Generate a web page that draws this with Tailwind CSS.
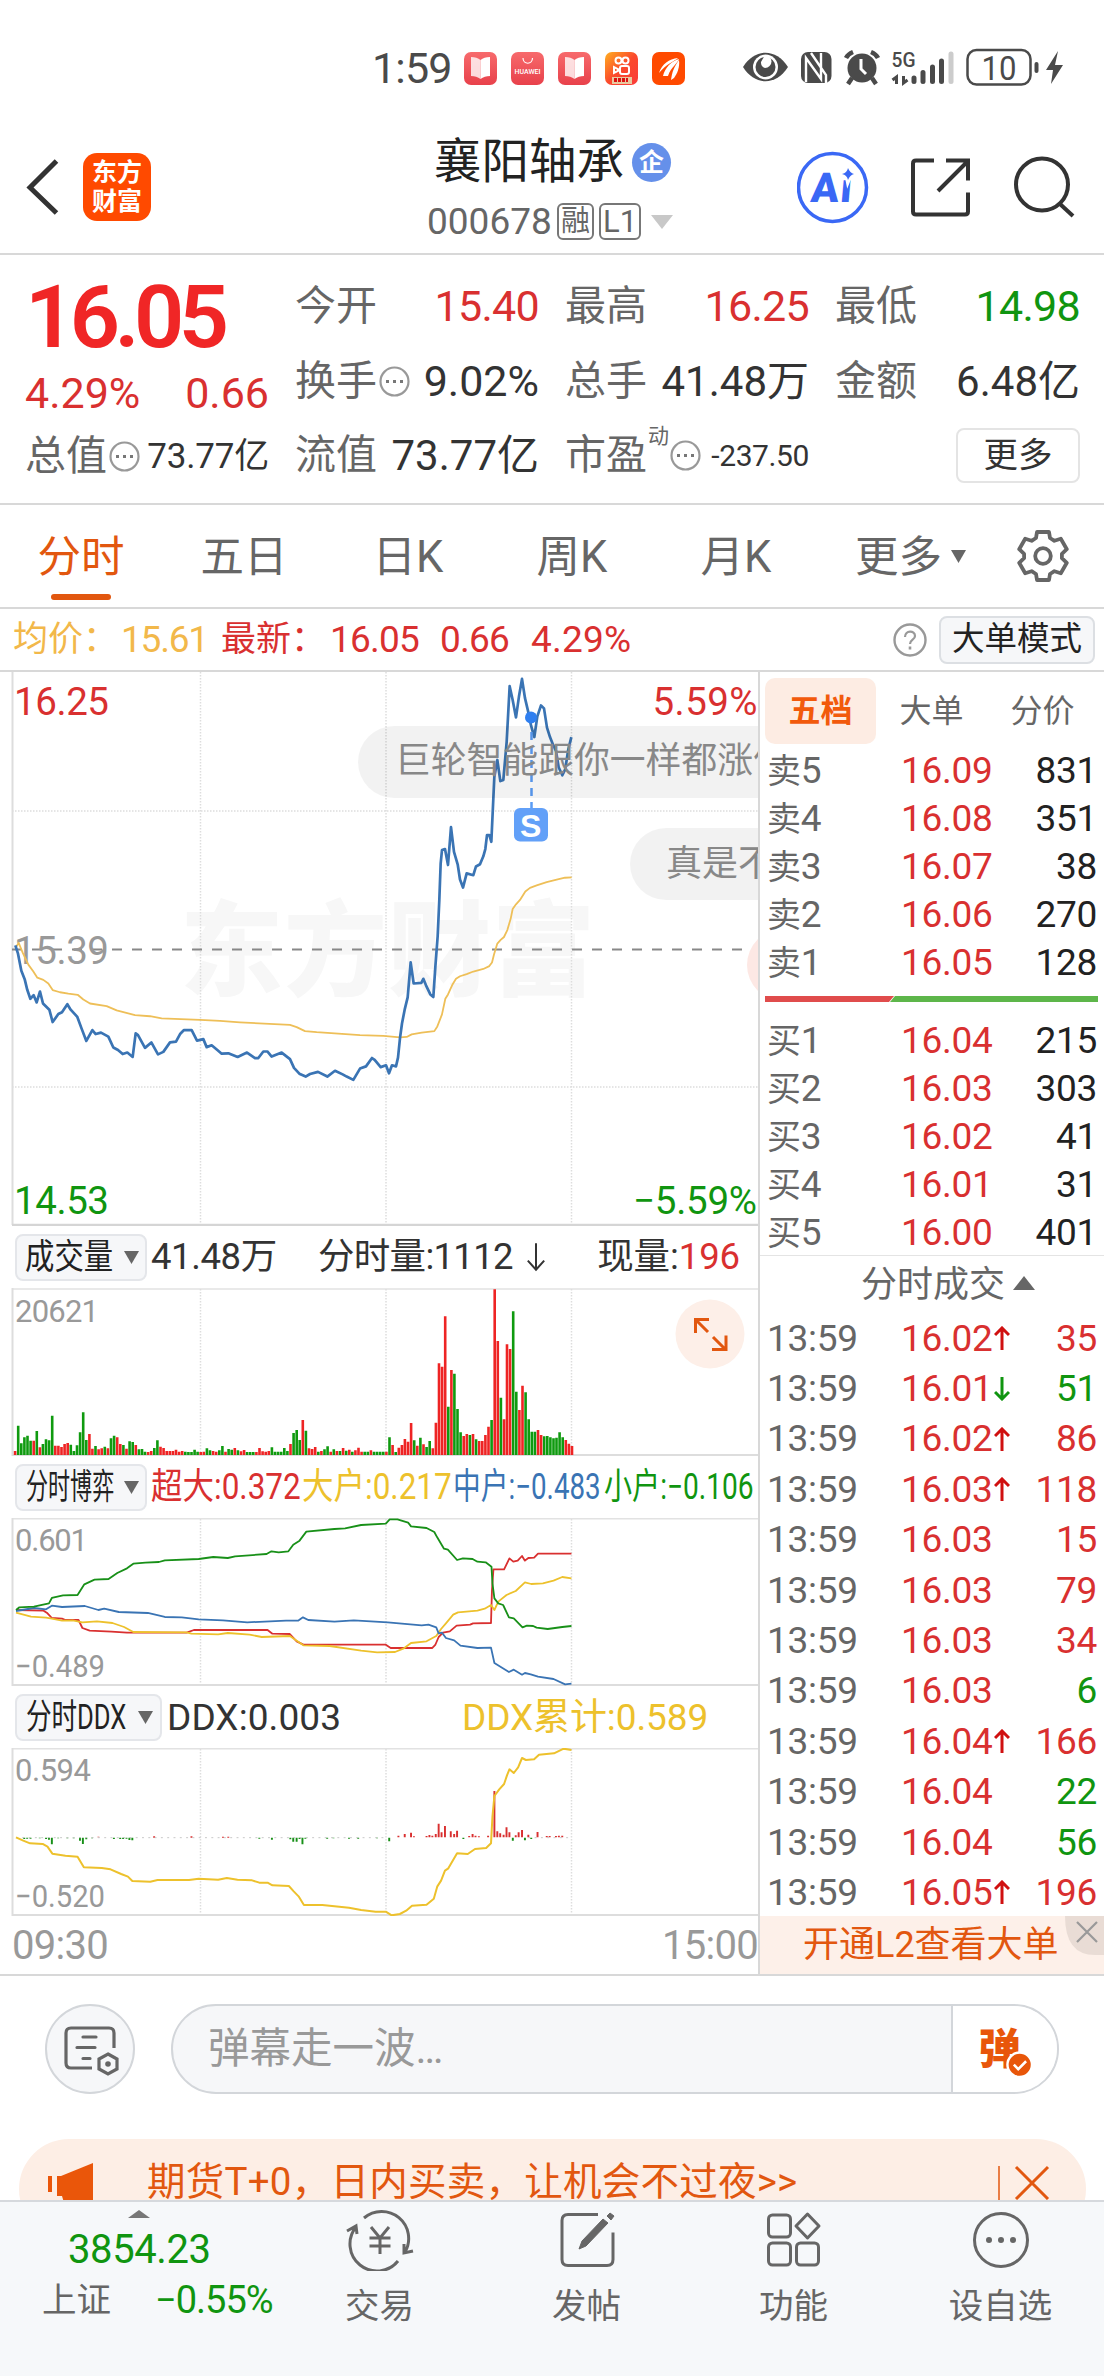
<!DOCTYPE html>
<html lang="zh-CN">
<head>
<meta charset="utf-8">
<title>襄阳轴承 000678</title>
<script src="https://cdn.jsdelivr.net/npm/@tailwindcss/browser@4"></script>
</head>
<body class="w-[1104px] h-[2376px] overflow-hidden bg-white font-['Roboto','Noto_Sans_CJK_SC',sans-serif] leading-none text-[#333] flex flex-col whitespace-nowrap">

<!-- status bar -->
<header class="h-[137px] shrink-0 flex pl-[372px]">
  <div class="h-[137px] w-[92px] flex items-center text-[43px] tracking-[-0.8px] text-[#4a4a4a]">1:59</div>
  <svg class="w-[640px] h-[137px]" viewBox="464 0 640 137" fill="none">
    <defs>
      <linearGradient id="pk" x1="0" y1="0" x2="0" y2="1"><stop offset="0" stop-color="#f76a6c"/><stop offset="1" stop-color="#e8414b"/></linearGradient>
      <linearGradient id="ks" x1="0" y1="0" x2="1" y2="1"><stop offset="0" stop-color="#ffb020"/><stop offset=".5" stop-color="#fb4a2c"/><stop offset="1" stop-color="#fa3a3a"/></linearGradient>
    </defs>
    <g id="book"><rect x="464" y="52" width="33" height="33" rx="7" fill="url(#pk)"/><path d="M471 57q6 0 9.500 3v19q-4-3-9.500-3z" fill="#fff" opacity=".8"/><path d="M490 57q-6 0-9.500 3v19q4-3 9.500-3z" fill="#fff"/></g>
    <rect x="511" y="52" width="33" height="33" rx="7" fill="url(#pk)"/><path d="M523 58c0 7 9.500 7 9.500 0" stroke="#fff" stroke-width="1.200"/><text x="514.500" y="73.500" font-size="7" fill="#fff" font-family="Roboto" font-weight="500" textLength="26">HUAWEI</text>
    <use href="#book" x="94"/>
    <rect x="605" y="52" width="33" height="33" rx="7" fill="url(#ks)"/><g stroke="#fff" stroke-width="2"><circle cx="618.500" cy="60.500" r="3"/><circle cx="625.500" cy="60.500" r="3"/><rect x="620" y="66" width="9" height="8" rx="2"/><path d="M614 67v6l4-2v-2z"/></g><rect x="612" y="77" width="20" height="7" fill="#e8c9a0"/><path d="M614 80h14" stroke="#d11" stroke-width="4" stroke-dasharray="3 1"/>
    <rect x="652" y="52" width="33" height="33" rx="7" fill="#ff4a00"/><g fill="#fff"><path d="M659 73c3-9 10-14 19-15-3 3-12 6-19 15z"/><path d="M663 76c2-8 8-15 16-17-1 4-8 8-11 17z"/><path d="M671 80c1-8 3-13 8-20 1 7-2 14-5 18z"/></g>
    <path d="M743 67c12-19 33-19 45 0c-12 19-33 19-45 0z" fill="#4a4a4a"/><circle cx="765.500" cy="67" r="12.500" fill="#fff"/><circle cx="765.500" cy="67" r="10" fill="#4a4a4a"/><path d="M765 55a6.500 6.500 0 0 1 0 13a6 6 0 0 1-4-6z" fill="#fff"/>
    <rect x="801" y="52" width="30.500" height="31" rx="7" fill="#4a4a4a"/><path d="M806 82V58l15 21V53M811 53l15 22v8" stroke="#fff" stroke-width="2.400"/>
    <circle cx="862" cy="68" r="14.500" fill="#4a4a4a"/><path d="M861 59v10l5 5" stroke="#fff" stroke-width="3"/><path d="M846 58q2-4 7-6M878 58q-2-4-7-6M852 78l-4 6M872 78l4 6" stroke="#4a4a4a" stroke-width="4.500"/>
    <text x="891.500" y="67" font-size="21" font-weight="500" fill="#4a4a4a" font-family="Roboto" textLength="24" lengthAdjust="spacingAndGlyphs">5G</text>
    <path d="M896.500 84V77l-4 3M903.500 76v7l4-3" stroke="#4a4a4a" stroke-width="3"/>
    <g stroke="#4a4a4a" stroke-width="5" stroke-linecap="round"><path d="M914 78v3.500M923 72.500v9M932.500 67v14.500M941.500 61v20.500"/><path d="M951 54v27.500" stroke="#ccc"/></g>
    <rect x="967.500" y="50" width="63" height="34.500" rx="9" stroke="#4a4a4a" stroke-width="2.500"/><text x="981.500" y="79.500" font-size="34" fill="#4a4a4a" font-family="Roboto" textLength="35" lengthAdjust="spacingAndGlyphs">10</text>
    <rect x="1034.500" y="62" width="4" height="11" rx="2" fill="#4a4a4a"/><path d="M1058 51l-12 19h7l-2 14 12-19h-8z" fill="#4a4a4a"/>
  </svg>
</header>

<!-- title bar -->
<section class="h-[118px] shrink-0 border-b-2 border-[#d8d8d8] flex">
  <svg class="w-[83px] h-[100px] shrink-0" viewBox="0 137 83 100" fill="none"><path d="M56.500 161L30 187.500L56.500 213" stroke="#333" stroke-width="5"/></svg>
  <div class="w-[68px] h-[68px] mt-4 shrink-0 rounded-[14px] bg-[#ff4a00] text-white text-[25px] leading-[29px] font-bold flex flex-col items-center justify-center"><span>东方</span><span>财富</span></div>
  <div class="w-[276px] shrink-0"></div>
  <div class="w-[370px] shrink-0">
    <div class="flex items-center h-[51px] pl-[7px]"><span class="text-[47.500px] text-[#222] w-[190px]">襄阳轴承</span><span class="ml-2 w-[39px] h-[39px] rounded-full bg-[#6590ea] text-white font-bold text-[25px] flex items-center justify-center">企</span></div>
    <div class="flex items-center h-[37px] mt-[15px] text-[37px] text-[#666]"><span class="w-[130px]">000678</span><span class="w-[37px] h-[37px] border-2 border-[#777] rounded-md text-[29px] flex items-center justify-center">融</span><span class="ml-[5px] w-[42px] h-[37px] border-2 border-[#777] rounded-md text-[31px] flex items-center justify-center">L1</span><svg class="ml-[10px] w-[22px] h-[14px]" viewBox="0 0 22 14"><path d="M0 0h22L11 14z" fill="#c8c8c8"/></svg></div>
  </div>
  <svg class="w-[307px] h-[100px] shrink-0" viewBox="797 137 307 100" fill="none">
    <circle cx="832.500" cy="187.500" r="34" stroke="#3a68f5" stroke-width="3.500"/><g transform="translate(810 201.500) skewX(-5)"><text font-family="Roboto" font-weight="900" font-size="41" fill="#3a68f5" textLength="41">Aı</text></g><path d="M848 168q2 5 6 6q-4 1-6 6q-1-5-6-6q5-1 6-6z" fill="#3a68f5" stroke="#fff" stroke-width="5" paint-order="stroke"/>
    <g stroke="#333" stroke-width="4"><path d="M934 160.500h-18q-3 0-3 3v48q0 3 3 3h49q3 0 3-3v-19"/><path d="M946 160.500h22v20M967 162l-29 29"/><circle cx="1042" cy="184.500" r="26"/><path d="M1060 204l13 12"/></g>
  </svg>
</section>

<!-- quote summary -->
<section class="h-[250px] shrink-0 border-b-2 border-[#d8d8d8] pl-[25px] flex gap-[26px] text-[41px] text-[#666]">
  <div class="w-[244px] pt-[25px]">
    <div class="h-[74px] flex items-center pl-0 text-[88px] font-semibold text-[#f02626] tracking-[-5.500px]">16.05</div>
    <div class="h-[64px] mt-[7px] flex items-center justify-between text-[43px] text-[#d93030]"><span>4.29%</span><span>0.66</span></div>
    <div class="h-[62px] flex items-center"><span class="w-[84px]">总值</span><svg class="w-[31px] h-[31px]" viewBox="0 0 31 31"><circle cx="15.500" cy="15.500" r="14" fill="none" stroke="#999" stroke-width="2.200"/><path d="M7 15.500h3M14 15.500h3M21 15.500h3" stroke="#777" stroke-width="3"/></svg><span class="ml-auto text-[35px] text-[#333] tracking-[-0.200px]">73.77亿</span></div>
  </div>
  <div class="w-[244px] pt-[14px]">
    <div class="h-[75px] flex items-center justify-between"><span>今开</span><span class="text-[43px] text-[#d93030] tracking-[-0.700px]">15.40</span></div>
    <div class="h-[75px] flex items-center"><span class="w-[84px]">换手</span><svg class="w-[31px] h-[31px]" viewBox="0 0 31 31"><circle cx="15.500" cy="15.500" r="14" fill="none" stroke="#999" stroke-width="2.200"/><path d="M7 15.500h3M14 15.500h3M21 15.500h3" stroke="#777" stroke-width="3"/></svg><span class="ml-auto text-[43px] text-[#333]">9.02%</span></div>
    <div class="h-[73px] flex items-center justify-between"><span>流值</span><span class="text-[42px] text-[#333]">73.77亿</span></div>
  </div>
  <div class="w-[244px] pt-[14px]">
    <div class="h-[75px] flex items-center justify-between"><span>最高</span><span class="text-[43px] text-[#d93030] tracking-[-0.700px]">16.25</span></div>
    <div class="h-[75px] flex items-center justify-between"><span>总手</span><span class="text-[42px] text-[#333]">41.48万</span></div>
    <div class="h-[73px] flex items-center"><span>市盈</span><span class="text-[21px] mb-[38px] ml-px">动</span><svg class="ml-px w-[31px] h-[31px]" viewBox="0 0 31 31"><circle cx="15.500" cy="15.500" r="14" fill="none" stroke="#999" stroke-width="2.200"/><path d="M7 15.500h3M14 15.500h3M21 15.500h3" stroke="#777" stroke-width="3"/></svg><span class="ml-auto text-[30px] text-[#333] tracking-[-0.400px]">-237.50</span></div>
  </div>
  <div class="w-[245px] pt-[14px]">
    <div class="h-[75px] flex items-center justify-between"><span>最低</span><span class="text-[43px] text-[#109510] tracking-[-0.700px]">14.98</span></div>
    <div class="h-[75px] flex items-center justify-between"><span>金额</span><span class="text-[42px] text-[#333]">6.48亿</span></div>
    <div class="h-[73px] flex items-center justify-end"><span class="w-[124px] h-[55px] border-2 border-[#e4e4e4] rounded-lg text-[34.500px] text-[#333] flex items-center justify-center">更多</span></div>
  </div>
</section>

<!-- period tabs -->
<nav class="h-[104px] shrink-0 border-b-2 border-[#d8d8d8] flex items-stretch text-[43.500px] text-[#666]">
  <div class="w-[162px] flex flex-col items-center text-[#e2570f] pt-[31px]"><span>分时</span><span class="w-[60px] h-[6px] rounded-full bg-[#e2570f] mt-[14px]"></span></div>
  <div class="w-[164px] flex justify-center pt-[31px]">五日</div>
  <div class="w-[164px] flex justify-center pt-[31px]">日K</div>
  <div class="w-[164px] flex justify-center pt-[31px]">周K</div>
  <div class="w-[164px] flex justify-center pt-[31px]">月K</div>
  <div class="w-[199px] flex pl-[37px] pt-[31px]">更多<svg class="w-[15px] h-[13px] ml-[9px] mt-[14px]" viewBox="0 0 15 13"><path d="M0 0h15L7.500 13z" fill="#666"/></svg></div>
  <svg class="w-[52px] h-[54px] mt-[24px]" viewBox="-26 -27 52 54" fill="none" stroke="#666" stroke-width="3.800" stroke-linejoin="round"><path d="M-7 -18L-6 -24H6L7 -18L11.400 -15.200L17.800 -17.200L23.800 -6.800L18.900 -2.200V2.200L23.800 6.800L17.800 17.200L11.400 15.200L7 18L6 24H-6L-7 18L-11.400 15.200L-17.800 17.200L-23.800 6.800L-18.900 2.200V-2.200L-23.800 -6.800L-17.800 -17.200L-11.400 -15.200Z"/><circle r="7.800"/></svg>
</nav>

<div class="h-[63px] shrink-0 border-b-2 border-[#d8d8d8] flex items-center pl-[13px] text-[37px] tracking-[-0.800px] text-[#d93030]">
  <span class="w-[108px] text-[35px] tracking-normal text-[#f2b84a]">均价：</span><span class="w-[100px] tracking-[-1.200px] text-[#f2b84a]">15.61</span>
  <span class="w-[109px] text-[35px] tracking-normal">最新：</span><span class="w-[110px]">16.05</span><span class="w-[91px]">0.66</span><span class="w-[362px] tracking-[0.200px]">4.29%</span>
  <svg class="w-[34px] h-[34px]" viewBox="0 0 34 34" fill="none" stroke="#999"><circle cx="17" cy="17" r="15.500" stroke-width="2.400"/><path d="M12 14c0-7 10-7 10-1c0 4-5 3.500-5 8" stroke-width="2.200"/><path d="M17 23.500v3" stroke-width="2.600"/></svg>
  <span class="ml-[12px] w-[156px] h-[48px] rounded-lg border-2 border-[#dcdfe3] bg-[#f6f7f9] text-[#222] text-[32.500px] tracking-normal flex items-center justify-center">大单模式</span>
</div>

<main class="h-[1304px] shrink-0 border-b-2 border-[#d8d8d8] flex">
  <!-- intraday charts -->
  <div class="w-[760px] shrink-0 border-r-2 border-[#d8d8d8] overflow-hidden">
    <div class="relative h-[554px]">
      <svg class="w-[758px] h-[554px] block" viewBox="0 672 758 554" fill="none">
        <text x="180" y="988" font-size="103" font-weight="900" fill="#f7f7f7" font-family="Noto Sans CJK SC" textLength="415">东方财富</text>
        <path d="M12.500 672V1225" stroke="#ddd" stroke-width="2"/><path d="M12 1225H758" stroke="#d5d5d5" stroke-width="2.500"/>
        <path d="M12 811H758M12 1087H758M200.500 672V1224M386 672V1224M571.500 672V1224" stroke="#ddd" stroke-width="1.500" stroke-dasharray="1.500 1.500"/>
        <path d="M12 949.500H758" stroke="#888" stroke-width="2" stroke-dasharray="10 10"/>
        <g font-family="Roboto" font-size="38.500" lengthAdjust="spacingAndGlyphs">
          <text x="14" y="714.500" fill="#d93030" textLength="95">16.25</text><text x="652.500" y="714.500" fill="#d93030" textLength="105">5.59%</text>
          <text x="14" y="963.500" fill="#999" textLength="95">15.39</text>
          <text x="14" y="1214" fill="#109510" textLength="95">14.53</text><text x="633" y="1214" fill="#109510" textLength="124">−5.59%</text>
        </g>
        <g transform="translate(0 660) scale(.33333 .36350)" stroke-linejoin="round">
          <path vector-effect="non-scaling-stroke" stroke="#eebf58" stroke-width="1.800" d="M48 790L56 778L68 805L85 838L100 857L112 874L130 880L145 890L158 908L180 914L205 918L233 921L250 934L270 945L320 952L350 964L405 977L450 980L485 986L600 990L660 993L720 997L870 1004L890 1010L915 1021L950 1024L1080 1032L1150 1034L1200 1038L1220 1037L1235 1030L1265 1025L1303 1021L1312 1008L1326 975L1336 932L1344 920L1358 892L1368 877L1380 870L1400 864L1420 857L1450 850L1468 842L1476 832L1482 810L1492 780L1502 770L1512 762L1522 743L1532 712L1538 685L1548 672L1560 660L1576 637L1590 627L1610 620L1640 611L1670 604L1695 599L1715 598"/>
          <path vector-effect="non-scaling-stroke" stroke="#3a74b4" stroke-width="2.700" d="M46 785L54 808L64 855L74 878L82 908L91 932L101 922L110 942L120 912L129 945L148 962L158 996L175 974L186 969L202 947L212 962L232 982L244 1012L259 1048L277 1018L287 1029L303 1025L325 1036L340 1066L354 1073L368 1084L382 1080L398 1092L407 1027L414 1032L435 1067L454 1052L474 1085L490 1078L510 1052L528 1050L541 1028L552 1018L575 1018L591 1047L610 1043L620 1065L635 1060L652 1073L665 1083L685 1082L713 1092L741 1080L765 1095L775 1095L790 1077L802 1077L815 1091L845 1080L870 1098L882 1122L898 1138L917 1146L930 1139L954 1133L982 1146L1005 1130L1028 1140L1040 1146L1060 1155L1080 1124L1098 1118L1116 1095L1124 1100L1142 1120L1158 1115L1167 1137L1176 1115L1188 1118L1194 1094L1200 1040L1206 1000L1214 962L1223 928L1232 832L1241 890L1264 888L1270 877L1278 895L1291 920L1300 927L1306 845L1313 760L1318 660L1322 560L1326 523L1335 520L1344 564L1353 460L1362 528L1373 562L1380 604L1389 626L1400 587L1420 592L1428 568L1440 562L1450 540L1456 520L1461 482L1468 482L1474 500L1483 322L1492 275L1501 333L1510 330L1520 225L1529 72L1538 110L1548 158L1557 100L1566 52L1575 105L1584 140L1593 180L1603 212L1612 155L1623 125L1632 133L1641 186L1650 212L1660 235L1668 250L1676 295L1687 317L1696 300L1704 250L1714 212"/>
        </g>
        <circle cx="531" cy="717.500" r="6" fill="#2f7ff0"/><path d="M531.500 732V808" stroke="#5a9cf5" stroke-width="2.500" stroke-dasharray="8 6"/>
        <rect x="514" y="808" width="34" height="33.500" rx="6" fill="#62a0f8"/><text x="520" y="836.500" font-size="32" font-weight="bold" fill="#fff" font-family="Liberation Sans">S</text>
      </svg>
      <div class="absolute left-[358px] top-[54px] h-[72px] w-[440px] rounded-full bg-black/5 flex items-center pl-[37px] text-[35.800px] text-[#888]">巨轮智能跟你一样都涨停</div>
      <div class="absolute left-[630px] top-[156px] h-[72px] w-[300px] rounded-full bg-black/5 flex items-center pl-[36px] text-[36px] text-[#888]">真是不错</div>
      <div class="absolute left-[747px] top-[257px] h-[72px] w-[200px] rounded-full bg-[#fde8e4]"></div>
    </div>

    <div class="h-[62px] flex items-center pl-[15px] text-[36.500px] text-[#333]">
      <span class="w-[132px] h-[47px] rounded-lg border-2 border-[#e4e6ea] bg-[#f6f7f9] flex items-center pl-[8px] text-[35px] text-[#222]"><span class="w-[88px] origin-left scale-x-[.84]">成交量</span><svg class="w-[15px] h-[13px] ml-[11px]" viewBox="0 0 15 13"><path d="M0 0h15L7.500 13z" fill="#666"/></svg></span>
      <span class="w-[171px] pl-[4px] tracking-[-0.400px]">41.48万</span><span class="w-[208px] tracking-[-0.700px]">分时量:1112</span>
      <svg class="w-[20px] h-[34px]" viewBox="0 0 22 34" fill="none" stroke="#333" stroke-width="2.200"><path d="M11 2v29M2 21l9 10 9-10"/></svg>
      <span class="ml-auto pr-[18px] tracking-[-0.100px]">现量:<span class="text-[#d93030]">196</span></span>
    </div>
    <svg class="w-[758px] h-[168px] block" viewBox="0 1288 758 168" fill="none">
      <path d="M12 1289H758" stroke="#e2e2e2" stroke-width="1.500"/><path d="M12.500 1288V1456M12 1455H758" stroke="#ddd" stroke-width="2"/><path d="M200.500 1289V1454M386 1289V1454M571.500 1289V1454" stroke="#ddd" stroke-width="1.500" stroke-dasharray="1.500 1.500"/>
      <text x="15" y="1321.500" font-size="31" fill="#999" font-family="Roboto" textLength="84">20621</text>
      <path id="up" fill="#ee2424"/><path id="down" fill="#0f9a0f"/>
      <circle cx="710" cy="1334" r="34.500" fill="#fdefe8"/><g stroke="#e2570f" stroke-width="3"><path d="M695.500 1333v-13.500h13.500M696 1320l12 12M712 1349.500h14v-14M713 1337l12 12"/></g>
    </svg>

    <div class="h-[62px] flex items-center pl-[15px] text-[36px]">
      <span class="w-[132px] shrink-0 h-[47px] rounded-lg border-2 border-[#e4e6ea] bg-[#f6f7f9] flex items-center pl-[9px] text-[35px] text-[#222]"><span class="w-[87px] origin-left scale-x-[.63]">分时博弈</span><svg class="w-[15px] h-[13px] ml-[11px]" viewBox="0 0 15 13"><path d="M0 0h15L7.500 13z" fill="#666"/></svg></span>
      <span class="w-[151px] ml-[4px] shrink-0 text-[#d93030] origin-left scale-x-[.875]">超大:0.372</span>
      <span class="w-[151px] shrink-0 text-[#edc12c] origin-left scale-x-[.875]">大户:0.217</span>
      <span class="w-[151px] shrink-0 text-[#3a74b4] origin-left scale-x-[.77]">中户:−0.483</span>
      <span class="w-[149px] shrink-0 text-[#109510] origin-left scale-x-[.78]">小户:−0.106</span>
    </div>
    <svg class="w-[758px] h-[168px] block" viewBox="0 1518 758 168" fill="none">
      <path d="M12 1518.700H758" stroke="#e2e2e2" stroke-width="1.500"/><path d="M12.500 1518V1686M12 1685H758" stroke="#ddd" stroke-width="2"/><path d="M200.500 1519V1684M386 1519V1684M571.500 1519V1684" stroke="#ddd" stroke-width="1.500" stroke-dasharray="1.500 1.500"/>
      <g font-family="Roboto" font-size="31" fill="#999"><text x="15" y="1551" textLength="73">0.601</text><text x="15" y="1677" textLength="90" lengthAdjust="spacingAndGlyphs">−0.489</text></g>
      <g transform="translate(0 1490) scale(.48470 .33333)" stroke-width="1.800" stroke-linejoin="round">
        <path vector-effect="non-scaling-stroke" stroke="#d93030" d="M33 360L90 362L98 370L107 384L128 386L135 390L162 390L170 414L185 422L230 425L262 428L385 428L400 420L552 420L562 431L598 432L612 454L626 464L796 464L806 474L892 474L898 465L905 441L914 428L928 424L942 407L970 404L976 400L1013 399L1015 300L1018 238L1040 238L1051 205L1059 215L1068 212L1077 198L1083 212L1090 204L1102 203L1110 191H1179"/>
        <path vector-effect="non-scaling-stroke" stroke="#edc12c" d="M33 368L64 380L95 383L107 386L128 392L150 391L170 397L200 394L232 399L256 411L275 426L385 427L395 431L450 433L470 429L515 434L540 441L598 438L610 450L626 466L680 468L745 482L778 487L815 486L832 476L848 459L880 454L900 438L910 417L920 400L935 374L945 367L985 362L1000 356L1013 345L1020 360L1028 335L1045 315L1064 303L1083 277L1096 282L1120 280L1142 272L1160 261L1179 265"/>
        <path vector-effect="non-scaling-stroke" stroke="#3a74b4" d="M33 363L70 354L95 358L107 347L128 351L175 348L203 360L215 356L245 366L305 369L340 381L375 382L410 388L460 391L510 397L590 392L615 392L625 382L636 390L690 395L730 391L800 397L870 406L884 404L900 412L905 430L912 428L920 444L937 451L950 467L985 474L1013 473L1020 519L1050 546L1060 539L1077 554L1083 549L1095 553L1110 560L1142 567L1166 583L1179 581"/>
        <path vector-effect="non-scaling-stroke" stroke="#189018" d="M33 360L40 352L70 350L101 340L107 324L130 316L160 315L174 283L195 269L224 267L242 249L262 235L275 221L300 218L328 216L340 211L410 207L440 201L470 204L485 199L550 192L560 184L575 187L595 184L605 164L618 152L632 125L690 117L712 115L745 105L796 101L804 88L820 88L842 98L848 109L880 114L896 126L902 142L916 176L924 179L943 210L955 205L975 207L985 215L1002 217L1014 230L1016 280L1020 325L1028 340L1038 345L1050 382L1060 385L1078 412L1087 407L1100 408L1107 413L1130 417L1160 411L1179 408"/>
      </g>
    </svg>

    <div class="h-[62px] flex items-center pl-[15px] text-[37px]">
      <span class="w-[147px] shrink-0 h-[47px] rounded-lg border-2 border-[#e4e6ea] bg-[#f6f7f9] flex items-center pl-[9px] text-[35px] text-[#222]"><span class="w-[102px] origin-left scale-x-[.73]">分时DDX</span><svg class="w-[15px] h-[13px] ml-[10px]" viewBox="0 0 15 13"><path d="M0 0h15L7.500 13z" fill="#666"/></svg></span>
      <span class="w-[295px] ml-[5px] tracking-[0.100px]">DDX:0.003</span><span class="text-[#edc12c] tracking-[-0.100px]">DDX累计:0.589</span>
    </div>
    <svg class="w-[758px] h-[168px] block" viewBox="0 1748 758 168" fill="none">
      <path d="M12 1748.700H758" stroke="#e2e2e2" stroke-width="1.500"/><path d="M12.500 1748V1916M12 1915H758" stroke="#ddd" stroke-width="2"/><path d="M200.500 1749V1914M386 1749V1914M571.500 1749V1914" stroke="#ddd" stroke-width="1.500" stroke-dasharray="1.500 1.500"/>
      <g font-family="Roboto" font-size="31" fill="#999"><text x="15" y="1781" textLength="76">0.594</text><text x="15" y="1907" textLength="90" lengthAdjust="spacingAndGlyphs">−0.520</text></g>
      <g transform="translate(0 1490) scale(.48470 .33333)" stroke-linejoin="round">
        <path stroke="#d93030" stroke-width="4" d="M203 1042v-2M318 1043v-4M395 1043v-4M460 1043v-3M471 1043v-3M822 1042v-5M835 1042v-10M848 1042v-14M854 1042v-3M880 1042v-4M886 1042v-7M892 1042v-5M899 1042v-10M905 1042v-41M911 1042v-15M918 1042v-34M930 1042v-18M937 1042v-10M943 1042v-20M968 1042v-4M975 1042v-10M981 1042v-5M988 1042v-3M1007 1042v-5M1020 1042v-139M1026 1042v-18M1032 1042v-12M1039 1042v-8M1045 1042v-30M1051 1042v-15M1064 1042v-6M1070 1042v-15M1077 1042v-22M1090 1042v-8M1109 1042v-16M1128 1042v-4M1134 1042v-4M1147 1042v-4M1153 1042v-5M1160 1042v-5"/>
        <path stroke="#189018" stroke-width="4" d="M50 1043v4M56 1043v3M63 1043v3M82 1043v2M95 1043v4M101 1043v6M107 1043v20M120 1043v2M139 1043v2M152 1043v2M165 1043v9M171 1043v19M178 1043v5M190 1043v2M235 1043v4M248 1043v4M254 1043v4M261 1043v3M267 1043v7M273 1043v8M535 1043v3M561 1043v6M599 1043v5M605 1043v12M612 1043v12M618 1043v4M624 1043v20M630 1043v3M675 1043v3M688 1043v2M720 1043v3M739 1043v3M778 1043v2M803 1043v11M956 1043v4M1058 1043v9M1083 1043v8M1096 1043v4"/>
        <path stroke="#bbb" stroke-width="2" stroke-dasharray="4 9" d="M33 1043H800M1090 1043H1179"/>
        <path vector-effect="non-scaling-stroke" stroke="#edc12c" stroke-width="2" d="M33 1042L48 1052L62 1060L88 1062L98 1070L108 1091L135 1097L160 1100L173 1132L210 1134L228 1138L250 1152L264 1160L273 1173L310 1175L325 1170L390 1170L410 1166L450 1169L468 1164L490 1169L520 1171L535 1178L552 1178L562 1186L596 1188L606 1204L616 1219L627 1245L665 1245L720 1253L745 1260L775 1265L796 1265L808 1276L825 1272L838 1262L850 1247L880 1244L895 1226L902 1190L910 1172L918 1142L925 1135L943 1090L965 1092L980 1077L1003 1074L1013 1060L1016 980L1020 918L1030 898L1040 882L1046 856L1051 838L1060 849L1069 832L1077 804L1085 810L1102 808L1112 794L1143 790L1163 776L1179 780"/>
      </g>
    </svg>
    <div class="h-[58px] flex items-center justify-between pl-[12px] pt-[2px] text-[40px] tracking-[-0.700px] text-[#999]"><span>09:30</span><span>15:00</span></div>
  </div>

  <!-- order book -->
  <aside class="flex-1 flex flex-col">
    <div class="h-[74px] shrink-0 pt-[6px] pl-[5px] flex text-[32px] text-[#666]">
      <span class="w-[111px] h-[66px] rounded-[10px] bg-[#fdece3] text-[#f25a0c] font-bold flex items-center justify-center">五档</span><span class="w-[111px] h-[66px] flex items-center justify-center">大单</span><span class="w-[111px] h-[66px] flex items-center justify-center">分价</span>
    </div>
    <div id="asks" class="h-[243px] shrink-0"></div>
    <div class="mt-[7px] ml-[5px] w-[333px] h-[6px] shrink-0"><svg class="block w-[333px] h-[6px]" viewBox="0 0 333 6"><path d="M0 0h129l-5 6H0z" fill="#e04c4c"/><path d="M130 0h203v6H125z" fill="#5db64a"/></svg></div>
    <div id="bids" class="h-[254px] shrink-0 pt-[14px] border-b border-[#e4e4e4]"></div>
    <div class="h-[57px] shrink-0 flex items-center pl-[101px] text-[36px] text-[#666]">分时成交<svg class="w-[22px] h-[14px] ml-[8px] mb-1" viewBox="0 0 22 14"><path d="M11 0L22 14H0z" fill="#666"/></svg></div>
    <div id="trades" class="shrink-0 h-[603px]"></div>
    <div class="relative h-[58px] shrink-0 bg-[#fdf0e9] text-[#e2570f] text-[36px] flex items-center pl-[43px]">开通L2查看大单
      <svg class="absolute right-0 top-0 w-[39px] h-[39px]" viewBox="0 0 39 39"><path d="M0 0h39v39H30Q0 39 0 0z" fill="#e9dcd5"/><path d="M12 6l20 20M32 6L12 26" stroke="#999" stroke-width="2.200"/></svg>
    </div>
  </aside>
</main>

<!-- comment bar -->
<section class="h-[224px] shrink-0 overflow-hidden">
  <div class="pt-[28px] pl-[45px] flex gap-[36px]">
    <svg class="w-[90px] h-[90px]" viewBox="45 2004 90 90" fill="none"><circle cx="90" cy="2049" r="44" fill="#f6f7f9" stroke="#d3d6da" stroke-width="2"/><g stroke="#666" stroke-width="3.200"><path d="M114 2048v-15q0-5-5-5H71q-5 0-5 5v30q0 5 5 5h21"/><path d="M83 2037h13M77 2047.500h18M83 2058.500h7" stroke-linecap="round"/><path d="M108 2054l9 5v10l-9 5-9-5v-10z"/></g><circle cx="108" cy="2064" r="2.800" fill="#666"/></svg>
    <div class="w-[888px] h-[90px] rounded-full border-2 border-[#d3d6da] bg-[#f6f7f9] overflow-hidden flex">
      <div class="flex-1 flex items-center pl-[35px] text-[41.500px] text-[#999]">弹幕走一波<span class="tracking-[2px]">…</span></div>
      <svg class="w-[106px] h-[86px] border-l-2 border-[#d3d6da] bg-white shrink-0" viewBox="953 2006 106 86"><text x="979" y="2064.500" font-size="43" font-weight="900" fill="#e8560a" font-family="Noto Sans CJK SC">弹</text><circle cx="1021" cy="2065" r="12.500" fill="#e8560a" stroke="#fff" stroke-width="2.500"/><path d="M1015 2065l4.500 4.500 8-8" stroke="#fff" stroke-width="2.600" fill="none"/></svg>
    </div>
  </div>
  <div class="mt-[45px] ml-[19px] w-[1067px] h-[100px] rounded-[50px] bg-[#fdeee5] flex pl-[29px] text-[38.500px] text-[#e2570f]">
    <svg class="w-[46px] h-[48px] mt-[24px] shrink-0" viewBox="0 0 46 48" fill="#ea560a"><path d="M0 13h4v16H0zM9 13h4L45 0v42L30 37l-1 6H17l-3-10H9z"/></svg>
    <span class="ml-[53px] mt-[24px] w-[849px] shrink-0 tracking-[0.250px]">期货T+0，日内买卖，让机会不过夜&gt;&gt;</span>
    <svg class="w-[60px] h-[61px] shrink-0" viewBox="996 2139 60 61" fill="none" stroke="#e2570f"><path d="M999 2166v34" stroke-width="1.500"/><path d="M1016 2167l32 32M1048 2167l-32 32" stroke-width="3"/></svg>
  </div>
</section>

<!-- bottom navigation -->
<footer class="h-[176px] shrink-0 border-t-2 border-[#d6d9dd] bg-[#f6f8fa] flex text-[34.500px] text-[#666]">
  <div class="w-[276px] pl-[42px]">
    <svg class="w-[22px] h-[8px] mt-[8px] ml-[86px] block" viewBox="0 0 22 8"><path d="M11 0L22 8H0z" fill="#777"/></svg>
    <div class="mt-[12px] ml-[26px] text-[40px] tracking-[-0.400px] text-[#109510]">3854.23</div>
    <div class="mt-[11px] flex items-center"><span class="w-[113px]">上证</span><span class="text-[38px] tracking-[-1px] text-[#109510]">−0.55%</span></div>
  </div>
  <div class="w-[207px] flex flex-col items-center"><svg class="w-[70px] h-[62px] mt-[7px]" viewBox="344 2209 70 62" fill="none" stroke="#666" stroke-width="3"><path d="M363 2218A27 27 0 0 1 404 2252M397 2261A27 27 0 0 1 355 2227M346 2231l9-5 1 8M412 2251l-9 2v-9"/><path d="M370 2227l9 11 9-11M379 2238v16M368.500 2238h21M368.500 2246h21"/></svg><span class="mt-[18px]">交易</span></div>
  <div class="w-[207px] flex flex-col items-center"><svg class="w-[62px] h-[62px] mt-[7px]" viewBox="555 2209 62 62" fill="none" stroke="#666" stroke-width="3"><path d="M597 2214.500H567q-6 0-6 6v39q0 6 6 6h39q6 0 6-6v-27"/><path d="M602 2219l5 4-22 23-7 3 3-8zM606 2216l3-3 4 3-3 4z" fill="#666" stroke-width="1"/></svg><span class="mt-[18px]">发帖</span></div>
  <div class="w-[207px] flex flex-col items-center"><svg class="w-[62px] h-[62px] mt-[7px]" viewBox="763 2209 62 62" fill="none" stroke="#666" stroke-width="3"><rect x="768.500" y="2215" width="22" height="22" rx="4"/><rect x="768.500" y="2243" width="22" height="22" rx="4"/><rect x="796.500" y="2243" width="22" height="22" rx="4"/><path d="M807.500 2214l11.500 12-11.500 12-11.500-12z" stroke-linejoin="round"/></svg><span class="mt-[18px]">功能</span></div>
  <div class="w-[207px] flex flex-col items-center"><svg class="w-[62px] h-[62px] mt-[7px]" viewBox="969 2209 62 62" fill="none" stroke="#666" stroke-width="3"><circle cx="1000" cy="2240" r="26.500"/><g fill="#666" stroke="none"><circle cx="988" cy="2240" r="3"/><circle cx="1000" cy="2240" r="3"/><circle cx="1012" cy="2240" r="3"/></g></svg><span class="mt-[18px]">设自选</span></div>
</footer>

<script>
const volume = 'r12 g88 g35 g53 g58 g43 r43 g72 r23 g33 g47 g44 g118 r28 r28 r24 r33 r36 g31 g12 g29 g68 g128 g45 r63 r19 g27 r17 r20 g25 r20 g50 g58 r53 r33 g30 r19 g41 g39 r30 g17 g18 g10 r9 r12 g21 g44 r25 r21 r12 r12 r12 r16 r10 r12 g10 g9 g9 g16 g10 r9 r10 g20 g14 r12 r10 g14 g27 r10 g18 g16 r21 g14 r11 r15 g9 g9 g9 r9 r21 r11 r10 r12 g23 g10 g10 g10 g21 g12 r33 g66 g75 g45 r105 g73 r20 r18 r24 g10 r12 g17 g26 r10 g17 r12 g12 r21 g13 r16 g10 r14 r22 r10 g10 g10 r14 g10 g10 g10 g10 r10 g53 r30 g9 r22 r30 r48 r40 r96 g44 r28 g52 r32 g24 g42 r20 r97 r275 r265 r416 g145 r255 g244 g138 g68 r57 r63 g60 r63 g47 r42 r42 r60 r85 g105 r497 r342 g172 r107 r332 r318 g431 g190 r135 r208 g188 g107 g70 g70 r75 r60 g56 g57 g53 g50 g52 g68 g53 r45 r34 r27'.split(' ');
const bars = { r: '', g: '' };
volume.forEach((v, i) => {
  const h = v.slice(1) / 3;
  bars[v[0]] += `M${(13.800 + i * 3.094).toFixed(1)} 1455v-${h.toFixed(1)}h2.6v${h.toFixed(1)}z`;
});
document.getElementById('up').setAttribute('d', bars.r);
document.getElementById('down').setAttribute('d', bars.g);

const level = ([n, p, v]) => `<div class="h-[48px] flex items-center pl-[7px] pr-[7px] text-[37px] tracking-[-0.300px]"><span class="w-[134px] text-[#666]"><span class="text-[34px]">${n[0]}</span>${n[1]}</span><span class="text-[#d93030]">${p}</span><span class="ml-auto text-[#222]">${v}</span></div>`;
document.getElementById('asks').innerHTML = [['卖5','16.09',831],['卖4','16.08',351],['卖3','16.07',38],['卖2','16.06',270],['卖1','16.05',128]].map(level).join('');
document.getElementById('bids').innerHTML = [['买1','16.04',215],['买2','16.03',303],['买3','16.02',41],['买4','16.01',31],['买5','16.00',401]].map(level).join('');

const up = '<svg class="ml-[4px] w-[16px] h-[24px]" viewBox="0 0 16 24" fill="none" stroke="#d01010" stroke-width="3"><path d="M8 24V3M1 9l7-7 7 7"/></svg>';
const down = '<svg class="ml-[4px] w-[16px] h-[24px]" viewBox="0 0 16 24" fill="none" stroke="#109510" stroke-width="3"><path d="M8 0v21M1 15l7 7 7-7"/></svg>';
document.getElementById('trades').innerHTML = [['16.02',up,35],['16.01',down,51,1],['16.02',up,86],['16.03',up,118],['16.03','',15],['16.03','',79],['16.03','',34],['16.03','',6,1],['16.04',up,166],['16.04','',22,1],['16.04','',56,1],['16.05',up,196]]
  .map(([p, a, v, g]) => `<div class="h-[50.4px] flex items-center pl-[7px] pr-[7px] text-[37px] tracking-[-0.300px]"><span class="w-[134px] text-[#666]">13:59</span><span class="w-[89px] text-[#d93030]">${p}</span>${a}<span class="ml-auto ${g ? 'text-[#109510]' : 'text-[#d93030]'}">${v}</span></div>`).join('');
</script>
</body>
</html>
